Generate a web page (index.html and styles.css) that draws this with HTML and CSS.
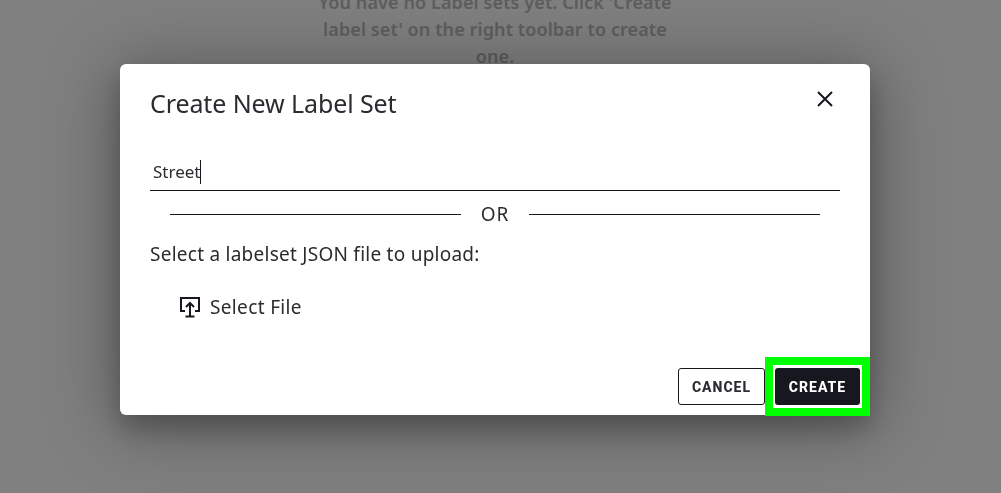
FILE: index.html
```html
<!DOCTYPE html>
<html lang="en">
<head>
    <meta charset="UTF-8">
    <meta name="viewport" content="width=device-width, initial-scale=1.0">
    <title>Create New Label Set</title>
    <link rel="stylesheet" href="styles.css">
</head>
<body>
    <!-- Page behind the dialog -->
    <p class="empty-note">You have no Label sets yet. Click 'Create label set' on the right toolbar to create one.</p>

    <div class="overlay">
        <div class="modal">
            <div class="modal-header">
                <h2>Create New Label Set</h2>
                <button type="button" class="close-btn" aria-label="Close">
                    <svg width="18" height="18" viewBox="0 0 18 18"><path d="M2 2L16 16M16 2L2 16" /></svg>
                </button>
            </div>

            <div class="name-field"><span class="name-value">Street</span><span class="caret"></span></div>

            <div class="or-row"><span class="or-line"></span><span>OR</span><span class="or-line"></span></div>

            <p class="upload-label">Select a labelset JSON file to upload:</p>

            <div class="select-file">
                <svg width="22" height="22" viewBox="0 0 22 22"><path d="M6 15H2V2H20V15H16M11 20V7M7 11L11 7L15 11M6.500 20.500H15.500" /></svg>
                <span>Select File</span>
            </div>

            <div class="modal-footer">
                <button type="button" class="btn btn-cancel">CANCEL</button>
                <div class="highlight-wrap">
                    <button type="button" class="btn btn-create">CREATE</button>
                    <span class="highlight"></span>
                </div>
            </div>
        </div>
    </div>
</body>
</html>
```

FILE: styles.css
```css
* {
    margin: 0;
    padding: 0;
    box-sizing: border-box;
    font-family: "Noto Sans", Arial, sans-serif;
}

body {
    height: 100vh;
    overflow: hidden;
    padding-right: 11px;
    background-color: #808080;
}

.empty-note {
    width: 375px;
    margin: -11px auto 0;
    text-align: center;
    font-size: 18px;
    font-weight: 600;
    letter-spacing: 0.1px;
    line-height: 27px;
    color: #5e5e5e;
}

.overlay {
    position: fixed;
    top: 0;
    left: 0;
    width: 100%;
    height: 100%;
    display: flex;
    justify-content: center;
    padding: 64px 11px 0 0;
}

.modal {
    width: 750px;
    height: 351px;
    padding: 0 30px;
    background: white;
    border-radius: 6px;
    box-shadow: 0 14px 24px 0 rgba(0,0,0,0.22), 0 8px 70px 8px rgba(0,0,0,0.3);
    color: #2b2b30;
    display: flex;
    flex-direction: column;
}

.modal-header {
    display: flex;
    justify-content: space-between;
    align-items: flex-start;
    padding-top: 22px;
}

.modal-header h2 {
    font-size: 25px;
    font-weight: 400;
    letter-spacing: -0.1px;
    line-height: 34px;
}

.close-btn {
    width: 18px;
    height: 18px;
    margin: 4px 6px 0 0;
    background: none;
    border: none;
    cursor: pointer;
}

.close-btn path {
    fill: none;
    stroke: #17181f;
    stroke-width: 2;
}

.name-field {
    display: flex;
    align-items: center;
    height: 38px;
    margin-top: 33px;
    padding-left: 3px;
    border-bottom: 1px solid #17181f;
    font-size: 17px;
}

.caret {
    width: 1px;
    height: 24px;
    background-color: #17181f;
}

.or-row {
    display: flex;
    align-items: center;
    justify-content: center;
    gap: 20px;
    height: 24px;
    margin-top: 11px;
    padding: 0 20px;
    font-size: 19px;
    letter-spacing: 0.9px;
}

.or-line {
    flex: 1;
    height: 1px;
    background-color: #17181f;
}

.upload-label {
    margin-top: 15px;
    font-size: 19px;
    letter-spacing: 0.25px;
    line-height: 26px;
}

.select-file {
    display: flex;
    align-items: center;
    gap: 9px;
    margin: 27px 0 0 29px;
    font-size: 19px;
    letter-spacing: 0.35px;
    line-height: 26px;
}

.select-file path {
    fill: none;
    stroke: #17181f;
    stroke-width: 2;
}

.modal-footer {
    display: flex;
    justify-content: flex-end;
    margin-top: auto;
    margin-right: -20px;
    margin-bottom: 10px;
    gap: 10px;
}

.btn {
    height: 37px;
    border-radius: 3px;
    font-family: "Roboto", Arial, sans-serif;
    font-size: 14px;
    font-weight: 800;
    letter-spacing: 1px;
    cursor: pointer;
}

.btn-cancel {
    width: 87px;
    background: white;
    border: 1px solid #17181f;
    color: #2b2b30;
}

.btn-create {
    width: 85px;
    background-color: #17181f;
    border: none;
    color: white;
}

.highlight-wrap {
    position: relative;
}

.highlight {
    position: absolute;
    top: -11px;
    left: -10px;
    right: -10px;
    bottom: -11px;
    border: 8px solid #00ff00;
    pointer-events: none;
}
```
